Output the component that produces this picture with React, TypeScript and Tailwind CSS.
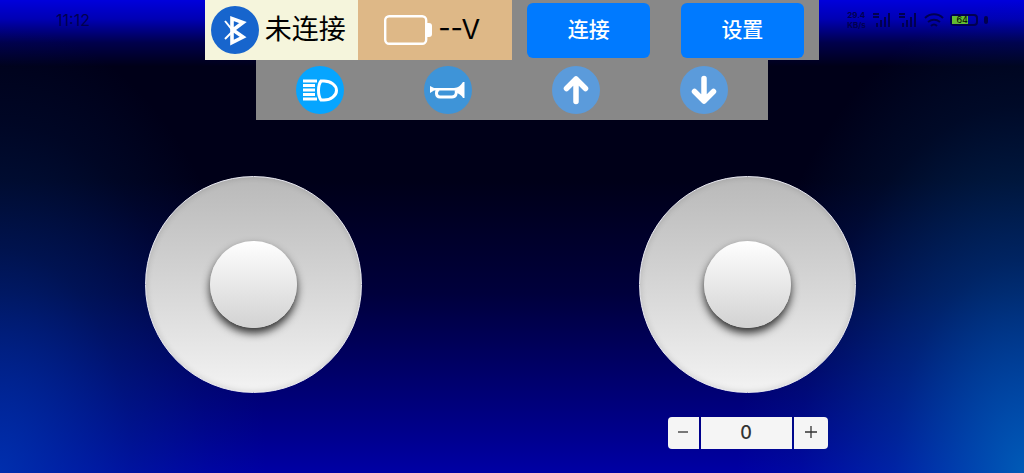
import { useState } from 'react'
import type { ReactNode } from 'react'
import clsx from 'clsx'

export default function App() {
  const [speed, setSpeed] = useState(0)

  return (
    <main className="relative isolate flex min-h-screen flex-col overflow-hidden font-[Inter,'Noto_Sans_CJK_SC',sans-serif]">
      <Backdrop />

      <header className="grid grid-cols-[1fr_3fr_1fr] items-start">
        <time className="pl-14 pt-3 text-base leading-4 text-[#000050]">11:12</time>
        <div className="grid h-15 grid-cols-4 bg-[#888888]">
          <div className="flex items-center gap-1.5 bg-[#f5f5dc] pl-1.5">
            <BluetoothIcon />
            <span className="text-[27px] leading-9 whitespace-nowrap text-black">未连接</span>
          </div>
          <div className="flex items-center justify-center gap-1.5 bg-[#deb887] pr-1.5">
            <BatteryIcon />
            <span className="text-[27px] leading-9 whitespace-nowrap text-black">--V</span>
          </div>
          <HeaderButton>连接</HeaderButton>
          <HeaderButton>设置</HeaderButton>
        </div>
        <StatusIcons />
      </header>

      <nav className="mx-auto grid h-15 w-1/2 grid-cols-4 place-items-center bg-[#888888]">
        <RoundButton label="车灯" className="bg-[#06a5ff]">
          <path d="M7 15h14M7 19.5h12M7 24h12M7 28.5h12M7 33h14" strokeWidth="3.2" />
          <path
            d="M25 15h3c7 0 12.5 4.5 12.5 9.5S35 34 28 34h-3c-1.5-2-2.5-5-2.5-9.5S23.5 17 25 15z"
            strokeWidth="3"
          />
        </RoundButton>
        <RoundButton label="喇叭" className="bg-[#3e94d8]">
          <path d="M6 20l4 2h20c4 0 7-3 9-6h1.5v16H39c-1-2-3-4-6-5v-2.5H10L6 27z" fill="white" stroke="none" />
          <path d="M15 23.5c-3.5 1-3.5 7.5 1 7.5h12c4 0 5-4 4-7" strokeWidth="3" />
        </RoundButton>
        <RoundButton label="上" className="bg-[#5b9bdb]">
          <path d="M24 35.5V13M14.5 22.5L24 13l9.5 9.5" strokeWidth="5.5" strokeLinecap="round" strokeLinejoin="round" />
        </RoundButton>
        <RoundButton label="下" className="bg-[#5b9bdb]">
          <path d="M24 12.5V35M14.5 25.5L24 35l9.5-9.5" strokeWidth="5.5" strokeLinecap="round" strokeLinejoin="round" />
        </RoundButton>
      </nav>

      <section className="mt-14 flex items-start justify-between pl-[145px] pr-[168px]">
        <Joystick label="左摇杆" />
        <div className="flex flex-col items-center gap-6">
          <Joystick label="右摇杆" />
          <div className="flex h-8 gap-0.5 text-[#333333]">
            <button
              type="button"
              aria-label="减"
              className="flex w-[31px] items-center justify-center rounded-l-sm bg-[#f5f5f5]"
              onClick={() => setSpeed((n) => n - 1)}
            >
              <StepIcon d="M2 6h10" />
            </button>
            <input
              aria-label="数值"
              className="w-[91px] bg-[#f5f5f5] text-center text-lg leading-6 font-medium"
              value={speed}
              onChange={(e) => setSpeed(Number(e.target.value) || 0)}
            />
            <button
              type="button"
              aria-label="加"
              className="flex w-[34px] items-center justify-center rounded-r-sm bg-[#f5f5f5]"
              onClick={() => setSpeed((n) => n + 1)}
            >
              <StepIcon d="M1 6h12M7 0v12" />
            </button>
          </div>
        </div>
      </section>
    </main>
  )
}

/* 背景：顶部和底部泛蓝，两侧下方偏青 */
function Backdrop() {
  return (
    <div className="absolute inset-0 -z-10 bg-[linear-gradient(to_bottom,#0000dc_0%,#0000b4_4%,#00004c_9%,#000018_14%,#000018_38%,#00003c_62%,#00006c_80%,#0000a4_100%)]">
      <div className="absolute inset-0 bg-[radial-gradient(ellipse_26%_95%_at_0%_100%,rgba(0,62,176,0.75),rgba(0,62,150,0.3)_50%,rgba(0,62,150,0.1)_78%,transparent),radial-gradient(ellipse_28%_100%_at_100%_100%,rgba(0,100,184,0.9),rgba(0,90,170,0.4)_45%,rgba(0,80,150,0.12)_78%,transparent)]" />
    </div>
  )
}

function HeaderButton({ children }: { children: ReactNode }) {
  return (
    <button
      type="button"
      className="m-auto h-[55px] w-4/5 rounded-md bg-[#007aff] text-[21px] leading-7 font-medium text-white"
    >
      {children}
    </button>
  )
}

function RoundButton({
  label,
  className,
  children,
}: {
  label: string
  className: string
  children: ReactNode
}) {
  return (
    <button type="button" aria-label={label} className={clsx('size-12 rounded-full', className)}>
      <svg viewBox="0 0 48 48" className="size-full" fill="none" stroke="white">
        {children}
      </svg>
    </button>
  )
}

function Joystick({ label }: { label: string }) {
  return (
    <div
      role="group"
      aria-label={label}
      className="flex size-[217px] items-center justify-center rounded-full border border-[#e8e8f0] bg-linear-to-b from-[#b9b9b9] to-[#f3f3f3] shadow-[inset_0_0_6px_rgba(0,0,0,0.15)]"
    >
      <button
        type="button"
        aria-label={label}
        className="size-[87px] rounded-full bg-linear-to-b from-white to-[#d2d2d2] shadow-[0_5px_8px_rgba(0,0,0,0.8)]"
      />
    </div>
  )
}

function StepIcon({ d }: { d: string }) {
  return (
    <svg viewBox="0 0 14 14" className="size-3.5" fill="none" stroke="#333333" strokeWidth="1.3" aria-hidden>
      <path d={d} />
    </svg>
  )
}

function BluetoothIcon() {
  return (
    <svg viewBox="0 0 48 48" className="size-12 shrink-0" aria-hidden>
      <circle cx="24" cy="24" r="24" fill="#1765cd" />
      <path d="M14 15l8 10-8 8" fill="none" stroke="white" strokeWidth="2" />
      <path d="M21 12.5v24L32 31l-10-7 10-7.5z" fill="none" stroke="white" strokeWidth="3.6" />
    </svg>
  )
}

function BatteryIcon() {
  return (
    <svg viewBox="0 0 48 30" className="h-[30px] w-12 shrink-0" aria-hidden>
      <rect x="1.2" y="1.2" width="41" height="27.6" rx="4" fill="none" stroke="white" strokeWidth="2.4" />
      <path d="M42 8h3c2 0 3 1 3 3v8c0 2-1 3-3 3h-3z" fill="white" />
    </svg>
  )
}

function StatusIcons() {
  return (
    <div className="flex items-center gap-1.5 pl-7 pt-2.5 text-[#000050]">
      <div className="text-[8px] leading-[10px] font-bold">
        <p>29.4</p>
        <p>KB/s</p>
      </div>
      <SignalIcon />
      <SignalIcon />
      <svg viewBox="0 0 20 16" className="h-4 w-5" fill="none" stroke="currentColor" strokeWidth="2" aria-hidden>
        <path d="M1 6c5-5 13-5 18 0M4 10c4-3 8-3 12 0M7 14c2-2 4-2 6 0" />
      </svg>
      <div className="flex h-3 w-7 items-center rounded-sm border-2 border-current">
        <span className="h-2 w-4 bg-[#63bb30] text-right text-[9px] leading-2 text-black">64</span>
      </div>
      <span className="h-2 w-1 rounded-full bg-current" />
    </div>
  )
}

function SignalIcon() {
  return (
    <svg viewBox="0 0 20 16" className="h-4 w-5" fill="none" stroke="currentColor" strokeWidth="2" aria-hidden>
      <path d="M5 15v-4M9 15V8M13 15V5M17 15V1M1 2h6M1 5h6" />
    </svg>
  )
}
